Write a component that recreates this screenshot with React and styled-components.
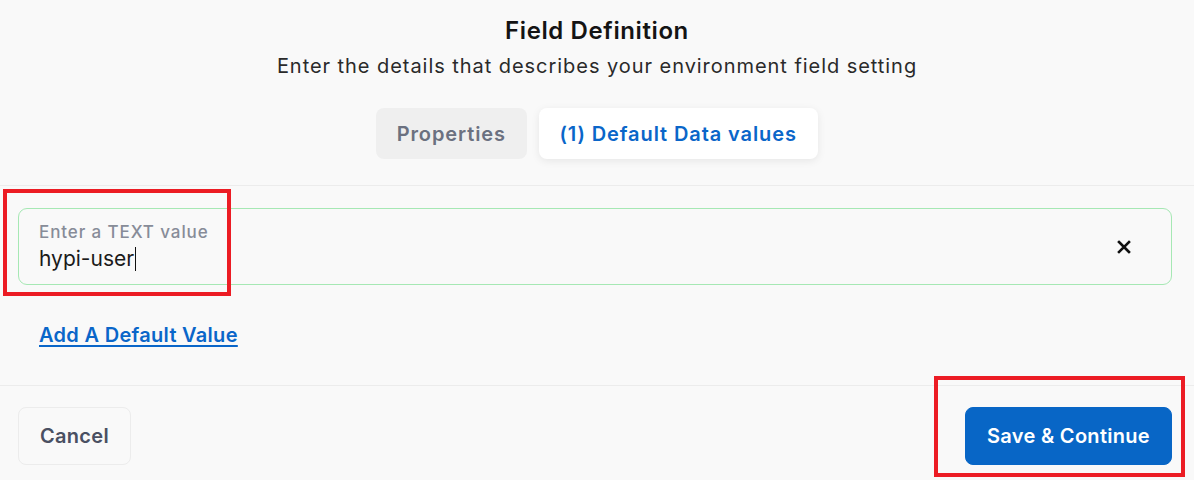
import React from "react";
import styled, { createGlobalStyle } from "styled-components";

const Global = createGlobalStyle`
  html, body { margin: 0; padding: 0; background: #f9f9f9; }
  body { font-family: Inter, "Noto Sans", Arial, sans-serif; color: #1b1b1f; }
  * { box-sizing: border-box; }
`;

const Page = styled.div`
  position: relative;
  width: 1194px;
  height: 480px;
  overflow: hidden;
  background: #f9f9f9;
  display: flex;
  flex-direction: column;
`;

const Header = styled.header`
  display: flex;
  flex-direction: column;
  align-items: center;
  padding: 15px 0 26px;
  border-bottom: 1px solid #ececec;
`;

const Title = styled.h1`
  margin: 0;
  font-size: 24px;
  line-height: 32px;
  font-weight: 600;
  letter-spacing: 0.6px;
  color: #141414;
`;

const Subtitle = styled.p`
  margin: 5px 0 0;
  font-size: 20px;
  line-height: 28px;
  letter-spacing: 0.95px;
  color: #2a2a2a;
`;

const Tabs = styled.div`
  display: flex;
  gap: 12px;
  margin-top: 28px;
`;

const Tab = styled.button`
  height: 51px;
  padding: 0 21px 0 20.5px;
  border: none;
  border-radius: 8px;
  font-family: inherit;
  font-size: 20px;
  letter-spacing: 0.9px;
  font-weight: 600;
  cursor: pointer;
  background: ${(p) => (p.$active ? "#ffffff" : "#efefef")};
  color: ${(p) => (p.$active ? "#0a66c9" : "#6b7180")};
  box-shadow: ${(p) => (p.$active ? "0 2px 8px rgba(0,0,0,0.08)" : "none")};
`;

const Body = styled.section`
  display: flex;
  flex-direction: column;
  align-items: flex-start;
  padding: 22px 22px 38px 18px;
  border-bottom: 1px solid #ececec;
`;

const Field = styled.div`
  width: 100%;
  height: 77px;
  border: 1px solid #a6e8b4;
  border-radius: 9px;
  display: flex;
  align-items: center;
  padding: 0 40px 0 20px;
`;

const FieldText = styled.div`
  flex: 1;
  display: flex;
  flex-direction: column;
`;

const Label = styled.span`
  font-size: 17px;
  line-height: 20px;
  letter-spacing: 0.9px;
  font-weight: 500;
  color: #878c98;
`;

const Value = styled.span`
  margin-top: 4px;
  font-size: 21px;
  line-height: 26px;
  color: #1b1b1b;
  display: flex;
  align-items: center;
`;

const Caret = styled.span`
  display: inline-block;
  width: 1px;
  height: 24px;
  background: #111;
  margin-left: 1px;
`;

const ClearButton = styled.button`
  border: none;
  background: none;
  padding: 0;
  display: flex;
  cursor: pointer;
`;

const Link = styled.a`
  margin: 38px 0 0 21px;
  font-size: 20px;
  line-height: 24px;
  letter-spacing: 0.3px;
  font-weight: 600;
  color: #0a66c9;
  text-decoration: underline;
  text-underline-offset: 3px;
  cursor: pointer;
`;

const Footer = styled.footer`
  display: flex;
  justify-content: space-between;
  padding: 21px 22px 15px 18px;
`;

const Button = styled.button`
  height: 58px;
  border-radius: 8px;
  font-family: inherit;
  font-size: 20px;
  letter-spacing: 0.3px;
  font-weight: 600;
  cursor: pointer;
  padding: 0 21px;
  border: 1px solid ${(p) => (p.$primary ? "#0866c6" : "#ececec")};
  background: ${(p) => (p.$primary ? "#0866c6" : "#f9f9f9")};
  color: ${(p) => (p.$primary ? "#ffffff" : "#4a5062")};
`;

const Highlight = styled.div`
  position: absolute;
  border: 4px solid #ec1c24;
  pointer-events: none;
`;

export default function App() {
  return (
    <Page>
      <Global />
      <Header>
        <Title>Field Definition</Title>
        <Subtitle>Enter the details that describes your environment field setting</Subtitle>
        <Tabs>
          <Tab>Properties</Tab>
          <Tab $active>(1) Default Data values</Tab>
        </Tabs>
      </Header>
      <Body>
        <Field>
          <FieldText>
            <Label>Enter a TEXT value</Label>
            <Value>
              hypi-user<Caret />
            </Value>
          </FieldText>
          <ClearButton aria-label="clear">
            <svg width="14" height="14" viewBox="0 0 14 14">
              <path d="M2 2 L12 12 M12 2 L2 12" stroke="#111" strokeWidth="2.6" strokeLinecap="square" />
            </svg>
          </ClearButton>
        </Field>
        <Link>Add A Default Value</Link>
      </Body>
      <Footer>
        <Button>Cancel</Button>
        <Button $primary>Save &amp; Continue</Button>
      </Footer>
      <Highlight style={{ left: 3, top: 189, width: 228, height: 107 }} />
      <Highlight style={{ left: 934, top: 376, width: 251, height: 101 }} />
    </Page>
  );
}
